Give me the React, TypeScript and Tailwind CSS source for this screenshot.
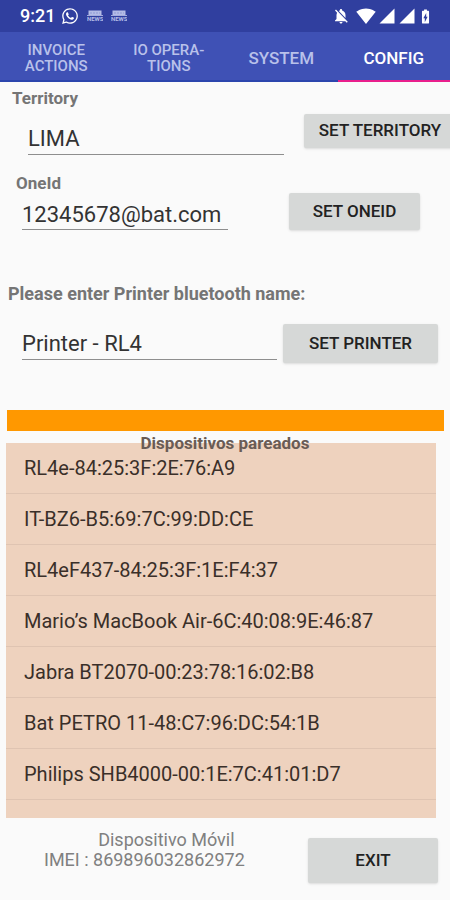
import { useState } from 'react'
import { FaWhatsapp } from 'react-icons/fa'
import {
  MdBatteryChargingFull,
  MdNotificationsOff,
  MdSignalCellular4Bar,
  MdSignalWifi4Bar,
} from 'react-icons/md'

const TABS = ['INVOICE ACTIONS', 'IO OPERA-TIONS', 'SYSTEM', 'CONFIG']

const DEVICES = [
  'RL4e-84:25:3F:2E:76:A9',
  'IT-BZ6-B5:69:7C:99:DD:CE',
  'RL4eF437-84:25:3F:1E:F4:37',
  'Mario’s MacBook Air-6C:40:08:9E:46:87',
  'Jabra BT2070-00:23:78:16:02:B8',
  'Bat PETRO 11-48:C7:96:DC:54:1B',
  'Philips SHB4000-00:1E:7C:41:01:D7',
]

const INPUT =
  'min-w-0 border-b border-[#8e8e8e] bg-transparent text-[22px] leading-6 text-[#333333] outline-none'
const BUTTON =
  'shrink-0 rounded-xs bg-[#d6d8d7] text-[17px] font-medium text-[#222222] shadow-sm whitespace-nowrap'
const LABEL = 'block leading-5 font-bold text-[#757575]'

function NewsIcon() {
  return (
    <svg width="16" height="12" viewBox="0 0 16 12" aria-hidden="true">
      <rect x="1.5" y="0.5" width="13" height="5" fill="#b4bce6" />
      <path d="M3 3h10" stroke="#8d98d4" strokeWidth="1" strokeDasharray="2 1" />
      <path d="M0 5.5h16" stroke="#a3acdd" strokeWidth="1" />
      <text x="0" y="11" fontSize="6" fontWeight="700" fill="#b4bce6">
        NEWS
      </text>
    </svg>
  )
}

function StatusBar() {
  return (
    <div className="flex h-8 items-center justify-between bg-[#303f9f] pr-4 pl-5 text-white">
      <div className="flex items-center">
        <span className="text-lg leading-8 font-medium">9:21</span>
        <FaWhatsapp size={18} className="ml-1.5" />
        <span className="ml-2 flex gap-2">
          <NewsIcon />
          <NewsIcon />
        </span>
      </div>
      <div className="flex items-center">
        <MdNotificationsOff size={18} />
        <MdSignalWifi4Bar size={20} className="ml-1.5" />
        <MdSignalCellular4Bar size={18} className="ml-0.5" />
        <MdSignalCellular4Bar size={18} className="ml-0.5" />
        <MdBatteryChargingFull size={17} className="ml-px" />
      </div>
    </div>
  )
}

export default function App() {
  const [tab, setTab] = useState('CONFIG')
  const [territory, setTerritory] = useState('LIMA')
  const [oneId, setOneId] = useState('12345678@bat.com')
  const [printer, setPrinter] = useState('Printer - RL4')

  return (
    <div className="min-h-screen overflow-hidden bg-[#fafafa] font-[Roboto,sans-serif]">
      <StatusBar />

      <nav className="grid h-[50px] grid-cols-4 bg-[#3f51b5]">
        {TABS.map(name => (
          <button
            key={name}
            onClick={() => setTab(name)}
            className={`flex items-center justify-center border-b-2 pt-1 font-medium ${
              tab === name ? 'border-[#e91e8c] text-white' : 'border-[#2c45ad] text-[#b9c1ea]'
            } ${name.length > 6 ? 'px-4 text-[15px] leading-4' : 'text-[17px] leading-5'}`}
          >
            {name}
          </button>
        ))}
      </nav>

      <main>
        <section className="pt-1.5">
          <label htmlFor="territory" className={`${LABEL} pl-3 text-[17px]`}>
            Territory
          </label>
          <div className="-mr-1.5 flex items-start pt-1.5 pl-7">
            <input
              id="territory"
              value={territory}
              onChange={e => setTerritory(e.target.value)}
              className={`${INPUT} mt-2 h-[33px] flex-1`}
            />
            <button className={`${BUTTON} ml-5 h-[34px] w-[152px]`}>SET TERRITORY</button>
          </div>
        </section>

        <section className="pt-[18px]">
          <label htmlFor="oneid" className={`${LABEL} pl-4 text-[17px]`}>
            OneId
          </label>
          <div className="flex items-end justify-between pr-[30px] pl-[22px]">
            <input
              id="oneid"
              value={oneId}
              onChange={e => setOneId(e.target.value)}
              className={`${INPUT} h-[37px] w-[206px] pt-1.5`}
            />
            <button className={`${BUTTON} h-[37px] w-[131px]`}>SET ONEID</button>
          </div>
        </section>

        <section className="pt-[54px]">
          <label htmlFor="printer" className={`${LABEL} pl-2 text-lg`}>
            Please enter Printer bluetooth name:
          </label>
          <div className="flex items-start pt-5 pr-3 pl-[22px]">
            <input
              id="printer"
              value={printer}
              onChange={e => setPrinter(e.target.value)}
              className={`${INPUT} h-9 flex-1 pt-1`}
            />
            <button className={`${BUTTON} ml-1.5 h-[39px] w-[155px]`}>SET PRINTER</button>
          </div>
        </section>

        <div className="mt-[47px] mr-1.5 ml-[7px] h-[21px] bg-[#ff9800]" />

        <section className="relative mt-3 mr-3.5 ml-1.5">
          <h2 className="absolute inset-x-0 -top-2.5 pl-2 text-center text-[17px] leading-5 font-bold text-[#6a5c55]">
            Dispositivos pareados
          </h2>
          <ul className="bg-[#eed2be] pb-[18px]">
            {DEVICES.map(device => (
              <li
                key={device}
                className="flex h-[51px] items-center border-b border-[#dfc4b2] pl-[18px] text-xl leading-6 text-[#3a2f29]"
              >
                {device}
              </li>
            ))}
          </ul>
        </section>

        <footer className="flex items-start justify-between pt-3 pr-3 pl-11">
          <div className="text-lg leading-5 text-[#808080]">
            <p className="pl-11 text-center">Dispositivo Móvil</p>
            <p>IMEI : 869896032862972</p>
          </div>
          <button className={`${BUTTON} mt-2 h-[45px] w-[130px] shadow`}>EXIT</button>
        </footer>
      </main>
    </div>
  )
}
